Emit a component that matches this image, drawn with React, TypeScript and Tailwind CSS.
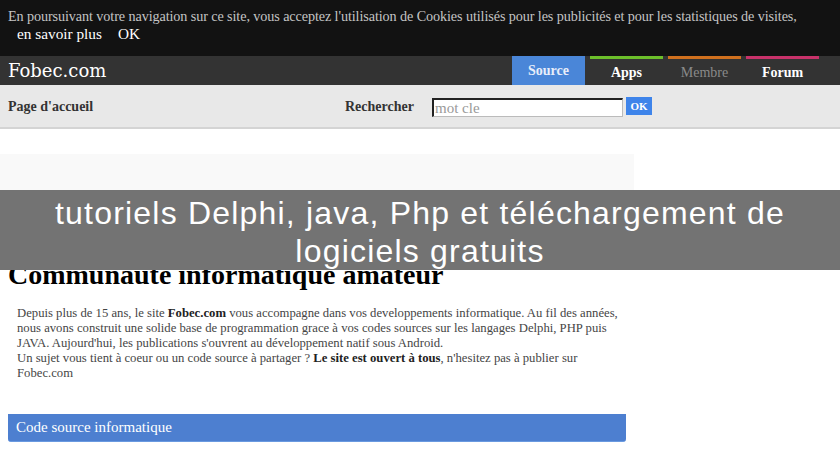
import React from 'react';

const serif = { fontFamily: '"Liberation Serif", "Times New Roman", serif' };

const tabs = [
  { label: 'Source', top: 'border-t-[#4a86d8]', bg: 'bg-[#4a86d8]', text: 'text-[#e8eefa] font-bold -mt-[3px]' },
  { label: 'Apps', top: 'border-t-[#6cbf2a]', bg: 'bg-transparent', text: 'text-white font-bold' },
  { label: 'Membre', top: 'border-t-[#d0701e]', bg: 'bg-transparent', text: 'text-[#8a8a8a]' },
  { label: 'Forum', top: 'border-t-[#c8326a]', bg: 'bg-transparent', text: 'text-white font-bold' },
];

export default function App() {
  return (
    <div className="relative w-[840px] h-[460px] overflow-hidden bg-white" style={serif}>
      {/* cookie bar */}
      <div className="h-[56px] bg-[#121212] px-2 pt-[8px] leading-[17px]">
        <p className="text-[14.2px] text-[#c4c4c4] whitespace-nowrap tracking-[-0.1px]">
          En poursuivant votre navigation sur ce site, vous acceptez l'utilisation de Cookies utilisés pour les publicités et pour les statistiques de visites,
        </p>
        <div className="flex gap-[16px] pl-[9px] text-[15.3px] text-white">
          <span>en savoir plus</span>
          <span>OK</span>
        </div>
      </div>

      {/* header */}
      <div className="h-[29px] bg-[#333333] flex items-stretch">
        <div className="flex-1 pl-2 pt-[4px] leading-[22px] text-white" style={{ fontFamily: '"DejaVu Serif", serif', fontSize: 18 }}>
          Fobec.com
        </div>
        <div className="flex gap-[5px] pr-[21px]">
          {tabs.map((t) => (
            <div
              key={t.label}
              className={`w-[73px] border-t-[3px] ${t.top} ${t.bg} flex items-center justify-center text-[14px]`}
            >
              <span className={t.text}>{t.label}</span>
            </div>
          ))}
        </div>
      </div>

      {/* sub header */}
      <div className="h-[44px] bg-[#e8e8e8] border-b-2 border-[#d4d4d4] flex items-center text-[14px] font-bold text-[#333]">
        <div className="w-[345px] pl-2">Page d'accueil</div>
        <div className="w-[87px]">Rechercher</div>
        <div className="flex items-center gap-[3px] mt-[3px]">
          <div className="w-[191px] h-[19px] bg-white border border-[#bbb] border-t-[#222] border-l-[#222] border-t-2 border-l-2 pl-[1px] text-[15px] font-normal text-[#999] leading-[16px]">
            mot cle
          </div>
          <div className="w-[26px] h-[18px] -mt-[3px] bg-[#3e84ea] text-white text-[11px] flex items-center justify-center">OK</div>
        </div>
      </div>

      {/* main */}
      <div className="flex">
        <div className="w-[634px]">
          <div className="h-[25px]" />
          <div className="h-[54px] bg-[#f9f9f9]" />
          <div className="h-[52px]" />
          <h1 className="pl-2 text-[28px] leading-[30px] font-bold text-black">Communauté informatique amateur</h1>
          <div className="pl-[17px] pt-[16px] text-[12.7px] leading-[15px] text-[#454545]">
            <p className="whitespace-nowrap">
              Depuis plus de 15 ans, le site <b className="text-[#222]">Fobec.com</b> vous accompagne dans vos developpements informatique. Au fil des années,
            </p>
            <p className="whitespace-nowrap">
              nous avons construit une solide base de programmation grace à vos codes sources sur les langages Delphi, PHP puis
            </p>
            <p className="whitespace-nowrap">JAVA. Aujourd'hui, les publications s'ouvrent au développement natif sous Android.</p>
            <p className="whitespace-nowrap">
              Un sujet vous tient à coeur ou un code source à partager ? <b className="text-[#222]">Le site est ouvert à tous</b>, n'hesitez pas à publier sur
            </p>
            <p>Fobec.com</p>
          </div>
          <div className="mt-[33px] ml-2 w-[618px] h-[28px] bg-[#4d7fd0] rounded-b-[3px] border-b border-[#6a9ae0] flex items-center pl-2 text-[15px] text-white">
            Code source informatique
          </div>
        </div>
        <div className="flex-1" />
      </div>

      {/* caption overlay */}
      <div
        className="absolute left-0 top-[190px] w-[840px] h-[80px] bg-[#737373] flex flex-col items-center pt-[4px] text-white text-[32px] leading-[38px] tracking-[1.2px]"
        style={{ fontFamily: '"Liberation Sans", Arial, sans-serif' }}
      >
        <span>tutoriels Delphi, java, Php et téléchargement de</span>
        <span>logiciels gratuits</span>
      </div>
    </div>
  );
}
